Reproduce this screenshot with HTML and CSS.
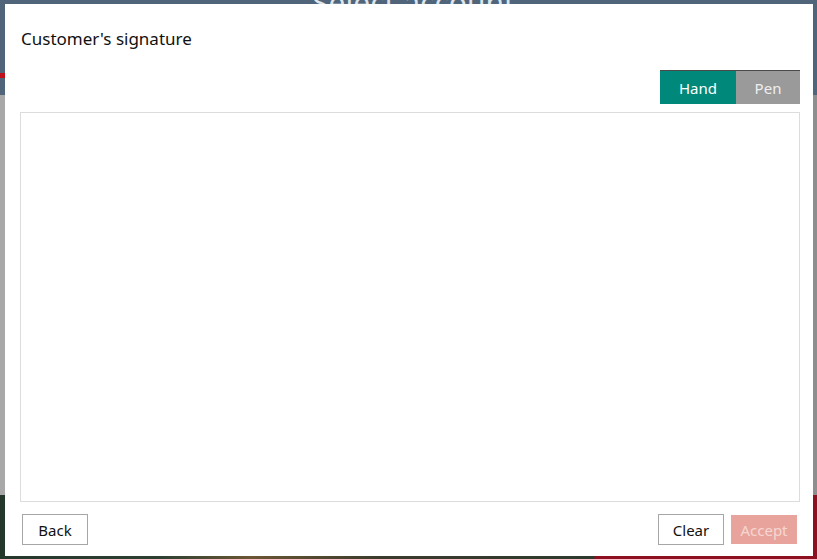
FILE: index.html
```html
<!DOCTYPE html>
<html lang="en">
<head>
<meta charset="utf-8">
<title>Customer's signature</title>
<link rel="stylesheet" href="styles.css">
</head>
<body>
<div class="app">
  <header class="app-header"><span class="app-title">Select account</span><span class="app-stripe"></span></header>
  <main class="app-body"></main>
  <footer class="app-footer"></footer>
</div>
<div class="dialog">
  <h1 class="dialog-title">Customer's signature</h1>
  <div class="toggle-row">
    <div class="toggle">
      <button class="toggle-btn active">Hand</button>
      <button class="toggle-btn">Pen</button>
    </div>
  </div>
  <div class="sig-pad"></div>
  <div class="actions">
    <button class="btn">Back</button>
    <div class="actions-right">
      <button class="btn">Clear</button>
      <button class="btn btn-accept" disabled>Accept</button>
    </div>
  </div>
</div>
</body>
</html>
```
FILE: styles.css
```css
* { box-sizing: border-box; }
html, body { margin: 0; padding: 0; width: 817px; height: 559px; overflow: hidden; }
body {
  font-family: "Noto Sans", "Open Sans", "Liberation Sans", sans-serif;
  position: relative;
}
.app { display: flex; flex-direction: column; height: 559px; }
.app-header {
  height: 95px;
  background: #50647a;
  display: flex;
  justify-content: center;
  position: relative;
}
.app-title {
  color: #dfe5ea;
  font-size: 30px;
  line-height: 1;
  margin-top: -12px;
  margin-left: 10px;
}
.app-stripe {
  position: absolute;
  left: 0; top: 73px;
  width: 30px; height: 5px;
  background: #c0101c;
}
.app-body { flex: 1; background: linear-gradient(to right, #a8a8a8, #b4b4b4 50%, #8e8e8e); }
.app-footer {
  height: 64px;
  background: linear-gradient(to right, #24372b 0, #2c4032 160px, #6a5634 250px, #3b3b2c 380px, #2c3a2e 594px, #8c1020 595px, #8c1020 100%);
}
.dialog {
  position: absolute;
  left: 5px; top: 4px;
  width: 808px; height: 552px;
  background: #fff;
  padding: 0 13px 0 15px;
  display: flex;
  flex-direction: column;
}
.dialog-title {
  margin: 0;
  padding: 24px 0 0 1px;
  font-size: 17px;
  font-weight: 400;
  line-height: 22px;
  color: #111;
  height: 66px;
}
.toggle-row { display: flex; justify-content: flex-end; height: 42px; }
.toggle { display: flex; height: 34px; border-top: 1px solid #4a4a4a; }
.toggle-btn {
  font-family: inherit;
  font-size: 15px;
  border: 0;
  padding: 0;
  height: 33px;
  width: 64px;
  background: #9a9a9a;
  color: #eeeeee;
}
.toggle-btn.active { width: 76px; background: #00897b; color: #ffffff; }
.sig-pad {
  height: 390px;
  border: 1px solid #dcdcdc;
  background: #fff;
}
.actions {
  display: flex;
  justify-content: space-between;
  padding: 12px 3px 0 2px;
}
.actions-right { display: flex; gap: 7px; }
.btn {
  font-family: inherit;
  font-size: 15px;
  width: 66px;
  height: 31px;
  padding: 0;
  background: #fff;
  border: 1px solid #a6a6a6;
  color: #111;
}
.btn-accept {
  border: 0;
  height: 29px;
  margin-top: 1px;
  background: #e8a49c;
  color: #f6d6d1;
}
```
